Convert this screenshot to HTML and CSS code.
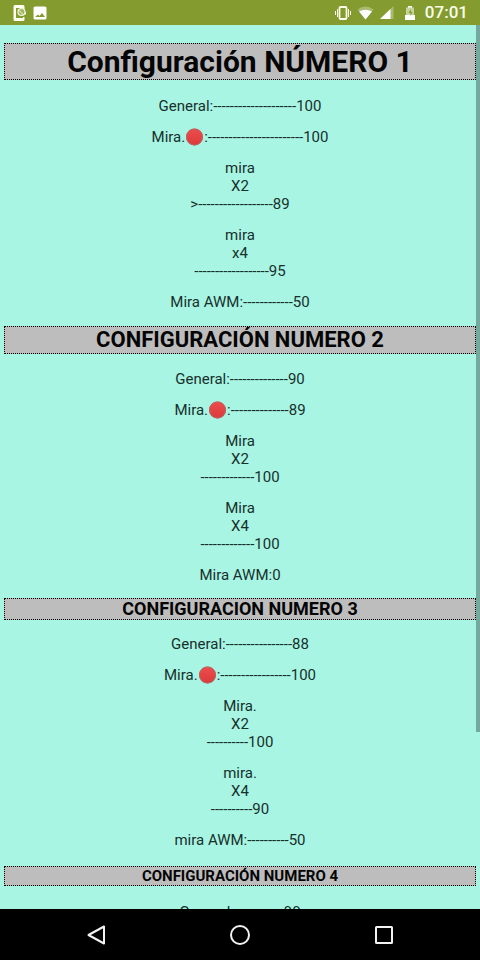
FILE: index.html
```html
<!DOCTYPE html>
<html lang="es">
<head>
<meta charset="utf-8">
<meta name="viewport" content="width=device-width, initial-scale=1">
<title>Configuración</title>
<link rel="stylesheet" href="styles.css">
</head>
<body>
<svg class="defs" aria-hidden="true">
  <defs>
    <linearGradient id="red" x1="0" y1="0" x2="0" y2="1">
      <stop offset="0" stop-color="#ee4d4c"/>
      <stop offset="1" stop-color="#d93a3b"/>
    </linearGradient>
    <symbol id="dot" viewBox="0 0 19 18">
      <circle cx="9.5" cy="9" r="8.5" fill="url(#red)"/>
      <circle cx="9.5" cy="9" r="8" fill="none" stroke="#b96660" stroke-width="1"/>
    </symbol>
  </defs>
</svg>
<div class="screen">
  <header class="status">
    <div class="status-group">
      <svg width="14" height="18" viewBox="0 0 14 18" aria-hidden="true">
        <path fill="#fdfdf0" fill-rule="evenodd" d="M2 1h8q1.500 0 1.500 1.500V5H10V4H3v10h7v-1h1.500v2.500Q11.500 17 10 17H2Q.5 17 .5 15.500v-13Q.5 1 2 1z"/>
        <circle cx="8.500" cy="8" r="3.500" fill="#a5b766" stroke="#f4f7df" stroke-width="1.200"/>
        <path d="M5 5.500L10.500 11M12.500 10.500V8" stroke="#f4f7df" fill="none"/>
      </svg>
      <svg width="14" height="14" viewBox="0 0 14 14" aria-hidden="true">
        <path fill="#fff" fill-rule="evenodd" d="M2 .5h10A1.500 1.500 0 0 1 13.500 2v10a1.500 1.500 0 0 1-1.500 1.500H2A1.500 1.500 0 0 1 .5 12V2A1.500 1.500 0 0 1 2 .5zM2 11h10L9 7 6.500 10 5 8.500z"/>
      </svg>
    </div>
    <div class="status-group">
      <svg width="16" height="14" viewBox="0 0 16 14" fill="none" stroke="#fbfce9" aria-hidden="true">
        <rect x="4.500" y="1" width="7" height="12" rx="1" stroke-width="1.800"/>
        <path d="M2.500 3v8M.5 5v4M13.500 3v8M15.500 5v4"/>
      </svg>
      <svg width="17" height="14" viewBox="0 0 17 14" aria-hidden="true">
        <path fill="#a9bb70" d="M8.500 13.500L.5 3.500Q8.500-2.500 16.500 3.500z"/>
        <path fill="#fff" d="M8.500 13.500L2 5.500Q8.500 2 15 5.500z"/>
      </svg>
      <svg width="14" height="14" viewBox="0 0 14 14" aria-hidden="true">
        <path fill="#a9bb70" d="M0 13L13.500 0v13z"/>
        <path fill="#fff" d="M0 13L10.500 3v10z"/>
      </svg>
      <svg class="battery" width="10" height="14" viewBox="0 0 10 14" aria-hidden="true">
        <path fill="#c6d39a" d="M3 0h4v1.500h2V10H1V1.500h2z"/>
        <path fill="#fff" d="M0 9h10v5H0z"/>
        <path fill="#fff" d="M3 0h4v1.500H3z"/>
        <path fill="#839b2f" d="M6 3L3.500 7h2v3L7.500 6H6z"/>
      </svg>
      <time class="clock">07:01</time>
    </div>
  </header>

  <main class="page">
    <h1>Configuración NÚMERO 1</h1>
    <p>General:--------------------100</p>
    <p>Mira.<svg class="dot" role="img" aria-label="rojo"><use href="#dot"/></svg>:-----------------------100</p>
    <p>mira<br>X2<br>&gt;------------------89</p>
    <p>mira<br>x4<br>------------------95</p>
    <p>Mira AWM:------------50</p>

    <h2>CONFIGURACIÓN NUMERO 2</h2>
    <p>General:--------------90</p>
    <p>Mira.<svg class="dot" role="img" aria-label="rojo"><use href="#dot"/></svg>:--------------89</p>
    <p>Mira<br>X2<br>-------------100</p>
    <p>Mira<br>X4<br>-------------100</p>
    <p>Mira AWM:0</p>

    <h3>CONFIGURACION NUMERO 3</h3>
    <p>General:----------------88</p>
    <p>Mira.<svg class="dot" role="img" aria-label="rojo"><use href="#dot"/></svg>:-----------------100</p>
    <p>Mira.<br>X2<br>----------100</p>
    <p>mira.<br>X4<br>----------90</p>
    <p>mira AWM:----------50</p>

    <h4>CONFIGURACIÓN NUMERO 4</h4>
    <p>General:------------90</p>
    <div class="scrollbar"></div>
  </main>

  <nav class="navbar">
    <button type="button" aria-label="Atrás">
      <svg width="24" height="24" viewBox="0 0 24 24"><path d="M20 3.500v17L4.500 12z"/></svg>
    </button>
    <button type="button" aria-label="Inicio">
      <svg width="24" height="24" viewBox="0 0 24 24"><circle cx="12" cy="12" r="9"/></svg>
    </button>
    <button type="button" aria-label="Recientes">
      <svg width="24" height="24" viewBox="0 0 24 24"><rect x="4" y="4" width="16" height="16" rx="0.500"/></svg>
    </button>
  </nav>
</div>
</body>
</html>
```
FILE: styles.css
```css
* {
  box-sizing: border-box;
}

body {
  margin: 0;
  background: #000;
  color: #16302c;
  font-family: Roboto, "Liberation Sans", sans-serif;
  font-size: 15px;
  line-height: 18px;
}

.defs {
  position: absolute;
  width: 0;
  height: 0;
}

.screen {
  display: flex;
  flex-direction: column;
  height: 100vh;
}

.status {
  flex: none;
  display: flex;
  justify-content: space-between;
  align-items: center;
  height: 25px;
  padding: 0 12px 0 13px;
  background: #839b2f;
}

.status-group {
  display: flex;
  align-items: center;
  gap: 6px;
}

.battery {
  margin: 0 4px 0 5px;
}

.clock {
  color: #fbfce9;
  font-size: 17px;
  font-weight: 500;
  line-height: 25px;
}

.page {
  position: relative;
  flex: 1;
  min-height: 0;
  overflow: hidden;
  padding: 18px 4px 0;
  background: #a9f5e3;
  text-align: center;
}

h1,
h2,
h3,
h4 {
  margin: 0 0 17px;
  border: 1px dotted #000;
  background: #bebdbe;
  color: #050505;
  font-weight: 700;
}

h1 {
  font-size: 30px;
  line-height: 35px;
}

h2 {
  margin-top: 15px;
  margin-bottom: 16px;
  font-size: 22px;
  line-height: 26px;
}

h3 {
  margin-top: 14px;
  margin-bottom: 15px;
  font-size: 18px;
  line-height: 20px;
}

h4 {
  margin-top: 17px;
  font-size: 15px;
  line-height: 18px;
}

p {
  margin: 0;
}

p + p {
  margin-top: 13px;
}

.dot {
  width: 19px;
  height: 18px;
  margin: -2px 0;
  vertical-align: -2px;
}

.scrollbar {
  position: absolute;
  top: 0;
  right: 0;
  width: 4px;
  height: 80%;
  background: #74aa9d;
}

.navbar {
  flex: none;
  display: flex;
  justify-content: center;
  height: 51px;
  background: #000;
}

.navbar button {
  display: flex;
  flex: 0 0 30%;
  align-items: center;
  justify-content: center;
  padding: 0;
  border: 0;
  background: none;
}

.navbar svg {
  fill: none;
  stroke: #f2f2f2;
  stroke-width: 2;
  stroke-linejoin: round;
}
```
